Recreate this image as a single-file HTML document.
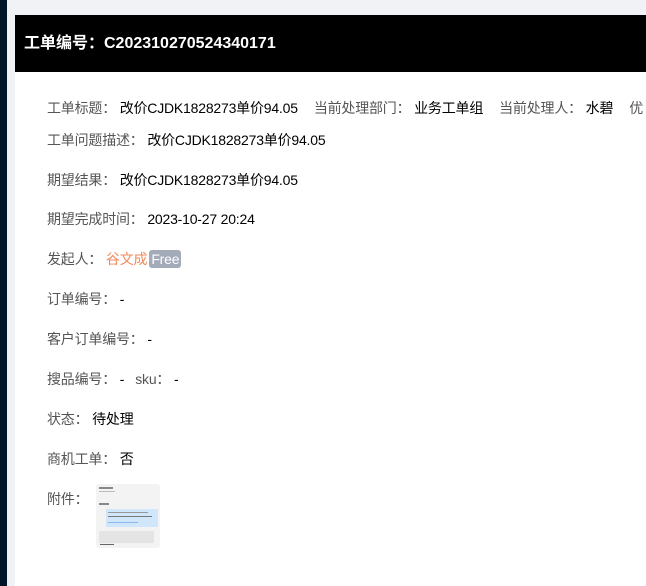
<!DOCTYPE html>
<html><head><meta charset="utf-8"><style>
*{margin:0;padding:0;box-sizing:border-box}
html,body{width:646px;height:586px;overflow:hidden}
body{background:#f0f2f5;font-family:"Liberation Sans","Noto Sans CJK SC",sans-serif;position:relative}
.side{position:absolute;left:0;top:0;width:7px;height:586px;background:#001529}
.panel{position:absolute;left:15px;top:15px;width:631px;height:571px;background:#fff;overflow:hidden}
.hd{height:57px;background:#000;color:#fff;font-weight:bold;font-size:16px;line-height:57px;padding-left:9px}
.row{position:absolute;left:32px;font-size:14px;color:#333;white-space:nowrap;line-height:20px;letter-spacing:-0.2px}
.v{color:#000}
.l{color:#555}
.g{display:inline-block;width:16px}
.tag{display:inline-block;background:#a3aab8;color:#fff;border-radius:3px;padding:0 2px;line-height:18px;font-size:14px;margin-left:2px}
.img{position:absolute;left:81px;top:469px;width:64px;height:64px;background:#f3f3f3;border-radius:3px;overflow:hidden}
</style></head><body>
<div class="side"></div>
<div class="panel">
<div class="hd">工单编号：C202310270524340171</div>
<div class="row" style="top:83px"><span class="l">工单标题：</span> <span class="v">改价CJDK1828273单价94.05</span><span class="g"></span><span class="l">当前处理部门：</span> <span class="v">业务工单组</span><span class="g"></span><span class="l">当前处理人：</span> <span class="v">水碧</span><span class="g"></span><span class="l">优</span></div>
<div class="row" style="top:115px"><span class="l">工单问题描述：</span> <span class="v">改价CJDK1828273单价94.05</span></div>
<div class="row" style="top:155px"><span class="l">期望结果：</span> <span class="v">改价CJDK1828273单价94.05</span></div>
<div class="row" style="top:194px"><span class="l">期望完成时间：</span> <span class="v">2023-10-27 20:24</span></div>
<div class="row" style="top:234px"><span class="l">发起人：</span> <span style="color:#f08a5d">谷文成</span><span class="tag">Free</span></div>
<div class="row" style="top:274px"><span class="l">订单编号：</span> <span class="v">-</span></div>
<div class="row" style="top:314px"><span class="l">客户订单编号：</span> <span class="v">-</span></div>
<div class="row" style="top:354px"><span class="l">搜品编号：</span> <span class="v">-</span>&nbsp;&nbsp; <span class="l">sku：</span> <span class="v">-</span></div>
<div class="row" style="top:394px"><span class="l">状态：</span> <span class="v">待处理</span></div>
<div class="row" style="top:434px"><span class="l">商机工单：</span> <span class="v">否</span></div>
<div class="row" style="top:474px"><span class="l">附件：</span></div>
<div class="img">
<div style="position:absolute;left:3px;top:3px;width:14px;height:2px;background:#888"></div>
<div style="position:absolute;left:3px;top:7px;width:16px;height:1px;background:#bbb"></div>
<div style="position:absolute;left:3px;top:19px;width:10px;height:2px;background:#888"></div>
<div style="position:absolute;left:10px;top:25px;width:52px;height:18px;background:#cfe6fb"></div>
<div style="position:absolute;left:12px;top:28px;width:40px;height:1px;background:#999"></div>
<div style="position:absolute;left:12px;top:32px;width:44px;height:1px;background:#777"></div>
<div style="position:absolute;left:12px;top:38px;width:30px;height:1px;background:#8ab8ee"></div>
<div style="position:absolute;left:3px;top:47px;width:55px;height:12px;background:#e4e4e4"></div>
<div style="position:absolute;left:4px;top:60px;width:14px;height:1px;background:#666"></div>
</div>
</div>
</body></html>
